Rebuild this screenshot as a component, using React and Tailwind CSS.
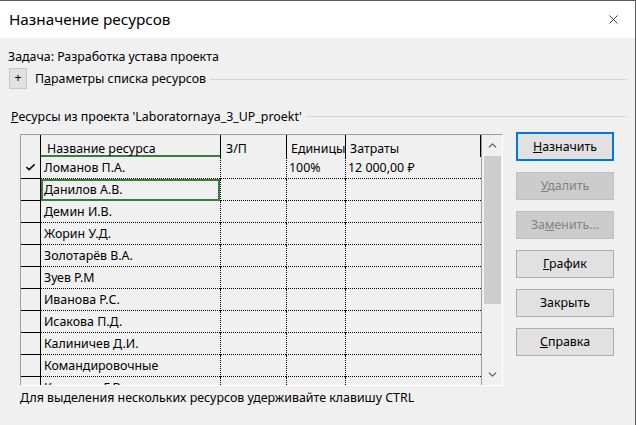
import { X, ChevronUp, ChevronDown, Check } from 'lucide-react';

const rows = [
  { name: 'Ломанов П.А.', units: '100%', cost: '12 000,00 ₽', assigned: true },
  { name: 'Данилов А.В.' },
  { name: 'Демин И.В.' },
  { name: 'Жорин У.Д.' },
  { name: 'Золотарёв В.А.' },
  { name: 'Зуев Р.М' },
  { name: 'Иванова Р.С.' },
  { name: 'Исакова П.Д.' },
  { name: 'Калиничев Д.И.' },
  { name: 'Командировочные' },
  { name: 'Кузнецов Г.В.' },
];

function Btn({ children, primary, disabled }) {
  return (
    <button
      className={
        primary
          ? 'h-[29px] w-[98px] bg-[#e1e1e1] border-2 border-[#0078d7] text-[12.4px] text-black'
          : disabled
          ? 'h-[28px] w-[98px] bg-[#cccccc] border border-[#bfbfbf] text-[12.4px] text-[#838383]'
          : 'h-[28px] w-[98px] bg-[#e1e1e1] border border-[#adadad] text-[12.4px] text-black'
      }
    >
      {children}
    </button>
  );
}

export default function App() {
  return (
    <div className="w-[636px] h-[425px] bg-[#f0f0f0] border-t border-r border-[#5a5a5a] overflow-hidden text-black" style={{ fontFamily: '"Noto Sans", "Open Sans", sans-serif' }}>
      {/* Title bar */}
      <div className="h-[37px] bg-white flex items-center justify-between pl-[9px] pr-[14px]">
        <span className="text-[15.3px] leading-none">Назначение ресурсов</span>
        <X size={15} strokeWidth={1.2} className="text-black" />
      </div>

      {/* Body */}
      <div className="pt-[11px] text-[12.4px] leading-[16px]">
        <div className="pl-[8px]">Задача: Разработка устава проекта</div>

        <div className="flex items-center mt-[3px] pl-[9px] pr-[8px] h-[21px]">
          <div className="w-[18px] h-[21px] bg-[#e1e1e1] border border-[#c8c8c8] flex items-center justify-center leading-none">+</div>
          <span className="ml-[8px]">П<span className="underline">а</span>раметры списка ресурсов</span>
          <div className="flex-1 h-px bg-[#d5d5d5] ml-[4px] mt-[1px]" />
        </div>

        <div className="flex items-center mt-[20px] pl-[11px] pr-[8px] h-[16px]">
          <span><span className="underline">Р</span>есурсы из проекта 'Laboratornaya_3_UP_proekt'</span>
          <div className="flex-1 h-px bg-[#d5d5d5] ml-[4px] -mt-[2px]" />
        </div>

        <div className="flex mt-[9px] pl-[20px]">
          {/* Table */}
          <div className="w-[483px] h-[252px] border-l border-t border-[#a0a0a0] border-r border-b border-r-white border-b-white flex overflow-hidden">
            <div className="w-[460px] overflow-hidden">
              {/* header */}
              <div className="flex h-[22px] bg-[#f0f0f0]">
                <div className="w-[20px] border-r border-black" />
                <div className="w-[179px] border-b-2 border-[#3a7d3a] pl-[6px] pt-[6px]">Название ресурса</div>
                <div className="w-[66px] border-l border-black pl-[5px] pt-[6px]">З/П</div>
                <div className="w-[59px] border-l border-black pl-[4px] pt-[6px]">Единицы</div>
                <div className="w-[136px] border-l border-r border-black pl-[4px] pt-[6px]">Затраты</div>
              </div>
              {rows.map((r, i) => (
                <div key={i} className="flex h-[22px]">
                  <div className="w-[20px] bg-[#f0f0f0] border-r border-b border-black flex items-center justify-center">
                    {r.assigned && <Check size={11} strokeWidth={3.5} />}
                  </div>
                  <div
                    className={
                      i === 1
                        ? 'w-[179px] border-2 border-[#3a7d3a] pl-[1px] flex items-center'
                        : 'w-[179px] border-b border-dotted border-black pl-[3px] flex items-center'
                    }
                  >
                    {r.name}
                  </div>
                  <div className="w-[66px] border-l border-b border-dotted border-black" />
                  <div className="w-[59px] border-l border-b border-dotted border-black pl-[2px] flex items-center">{r.units}</div>
                  <div className="w-[136px] border-l border-b border-dotted border-black pl-[2px] flex items-center">{r.cost}</div>
                </div>
              ))}
            </div>
            {/* scrollbar */}
            <div className="w-[21px] border-l border-[#a0a0a0] bg-[#f0f0f0] flex flex-col items-center">
              <div className="h-[21px] flex items-center justify-center text-[#606060]">
                <ChevronUp size={13} strokeWidth={2.5} />
              </div>
              <div className="w-[17px] h-[148px] bg-[#cdcdcd]" />
              <div className="flex-1" />
              <div className="h-[22px] flex items-center justify-center text-[#606060]">
                <ChevronDown size={13} strokeWidth={2.5} />
              </div>
            </div>
          </div>

          {/* Buttons */}
          <div className="ml-[13px] flex flex-col gap-[11px] -mt-[2px]">
            <Btn primary><span className="underline">Н</span>азначить</Btn>
            <Btn disabled><span className="underline">У</span>далить</Btn>
            <Btn disabled>За<span className="underline">м</span>енить...</Btn>
            <Btn><span className="underline">Г</span>рафик</Btn>
            <Btn>Закрыть</Btn>
            <Btn><span className="underline">С</span>правка</Btn>
          </div>
        </div>

        <div className="pl-[20px] mt-[4px]">Для выделения нескольких ресурсов удерживайте клавишу CTRL</div>
      </div>
    </div>
  );
}
